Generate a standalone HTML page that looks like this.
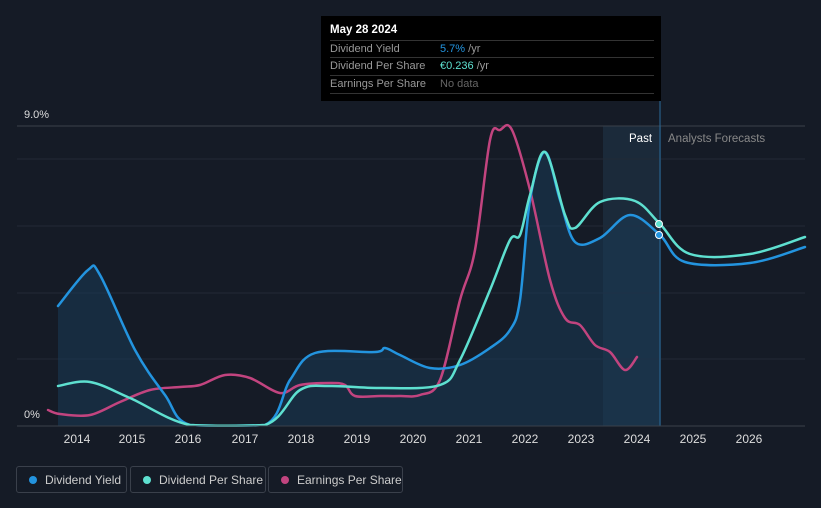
<!DOCTYPE html>
<html><head><meta charset="utf-8"><style>
body{margin:0;width:821px;height:508px;background:#151b26;font-family:"Liberation Sans",sans-serif;overflow:hidden;position:relative}
.tt{position:absolute;left:321px;top:16px;width:340px;height:85px;background:#000;color:#fff;font-size:11px}
.tt .h{position:absolute;left:9px;top:8px;font-weight:bold;font-size:11.5px}
.row{position:absolute;left:9px;width:324px;height:17px;border-top:1px solid #333;color:#999;line-height:17px;font-size:11px}
.row span{position:absolute;left:110px}
.leg{position:absolute;top:466px;height:27px;border:1px solid #3a404b;border-radius:3px;color:#ccc;font-size:12px;line-height:26px;box-sizing:border-box}
.leg i{position:absolute;left:12px;top:9px;width:8px;height:8px;border-radius:50%}
.leg b{font-weight:normal;position:absolute;left:28px}
</style></head><body>
<svg width="821" height="508" style="position:absolute;left:0;top:0">
<rect x="603" y="126" width="58" height="300" fill="#1b2a3a"/>
<line x1="17" y1="126" x2="805" y2="126" stroke="#3a404b"/>
<line x1="17" y1="159" x2="805" y2="159" stroke="#222935"/>
<line x1="17" y1="226" x2="805" y2="226" stroke="#222935"/>
<line x1="17" y1="293" x2="805" y2="293" stroke="#222935"/>
<line x1="17" y1="359" x2="805" y2="359" stroke="#222935"/>
<path id="area" fill="#1a3a55" fill-opacity="0.55" d=""/>
<line x1="660" y1="100" x2="660" y2="426" stroke="#2a6b9a"/>
<g fill="none" stroke-width="2.5" stroke-linejoin="round" stroke-linecap="round">
<path id="eps" stroke="#c2447f" data-p="48,410 60,414 90,415 120,402 150,390 180,387 200,385 225,375 250,378 280,393 300,385 330,383 345,385 355,396 380,396 400,396 420,395 440,380 460,300 475,250 490,140 500,130 512,130 530,190 550,280 565,318 580,325 595,345 610,352 625,370 637,357"/>
<path id="dy" stroke="#2394df" data-p="58,306 88,270 100,275 135,350 165,395 190,425 265,425 290,380 315,353 375,352 385,348 400,355 430,368 460,365 490,348 510,330 520,300 530,200 545,152 560,200 575,242 600,238 630,215 660,235 685,262 750,263 805,247"/>
<path id="dps" stroke="#5ee0d0" data-p="58,386 90,382 130,398 190,425 265,425 300,390 330,386 380,388 440,385 460,360 490,290 510,240 520,235 530,195 545,152 565,215 575,228 600,202 635,201 660,224 690,254 750,254 805,237"/>
</g>
<circle cx="659" cy="235" r="3.5" fill="#2394df" stroke="#fff"/>
<circle cx="659" cy="224" r="3.5" fill="#5ee0d0" stroke="#fff"/>
<line x1="17" y1="426" x2="805" y2="426" stroke="#3a404b"/>
<g font-size="12" fill="#ddd" text-anchor="middle">
<text x="77" y="443">2014</text><text x="132" y="443">2015</text><text x="188" y="443">2016</text><text x="245" y="443">2017</text><text x="301" y="443">2018</text><text x="357" y="443">2019</text><text x="413" y="443">2020</text><text x="469" y="443">2021</text><text x="525" y="443">2022</text><text x="581" y="443">2023</text><text x="637" y="443">2024</text><text x="693" y="443">2025</text><text x="749" y="443">2026</text>
</g>
<text x="24" y="118" font-size="11" fill="#ddd">9.0%</text>
<text x="24" y="418" font-size="11" fill="#ddd">0%</text>
<text x="629" y="142" font-size="11.5" fill="#fff">Past</text>
<text x="668" y="142" font-size="11.5" fill="#888">Analysts Forecasts</text>
</svg>
<div class="tt"><div class="h">May 28 2024</div>
<div class="row" style="top:24px">Dividend Yield<span><em style="font-style:normal;color:#2394df">5.7%</em> /yr</span></div>
<div class="row" style="top:41px">Dividend Per Share<span><em style="font-style:normal;color:#5ee0d0">€0.236</em> /yr</span></div>
<div class="row" style="top:59px;border-bottom:1px solid #333">Earnings Per Share<span style="color:#666">No data</span></div>
</div>
<div class="leg" style="left:16px;width:111px"><i style="background:#2394df"></i><b>Dividend Yield</b></div>
<div class="leg" style="left:130px;width:136px"><i style="background:#5ee0d0"></i><b>Dividend Per Share</b></div>
<div class="leg" style="left:268px;width:135px"><i style="background:#c2447f"></i><b>Earnings Per Share</b></div>
<script>
function smooth(s){var p=s.trim().split(/\s+/).map(function(q){return q.split(',').map(Number)});
var d='M'+p[0][0]+','+p[0][1];
for(var i=0;i<p.length-1;i++){var a=p[i-1]||p[i],b=p[i],c=p[i+1],e=p[i+2]||c;
var c1x=b[0]+(c[0]-a[0])/6,c1y=b[1]+(c[1]-a[1])/6,c2x=c[0]-(e[0]-b[0])/6,c2y=c[1]-(e[1]-b[1])/6;
c1y=Math.min(c1y,426);c2y=Math.min(c2y,426);
d+=' C'+c1x+','+c1y+' '+c2x+','+c2y+' '+c[0]+','+c[1];}return d;}
['eps','dy','dps'].forEach(function(id){var el=document.getElementById(id);el.setAttribute('d',smooth(el.getAttribute('data-p')));});
var ap="58,306 88,270 100,275 135,350 165,395 190,425 265,425 290,380 315,353 375,352 385,348 400,355 430,368 460,365 490,348 510,330 520,300 530,200 545,152 560,200 575,242 600,238 630,215 660,235";
document.getElementById('area').setAttribute('d',smooth(ap)+' L660,426 L58,426 Z');
</script>
</body></html>
